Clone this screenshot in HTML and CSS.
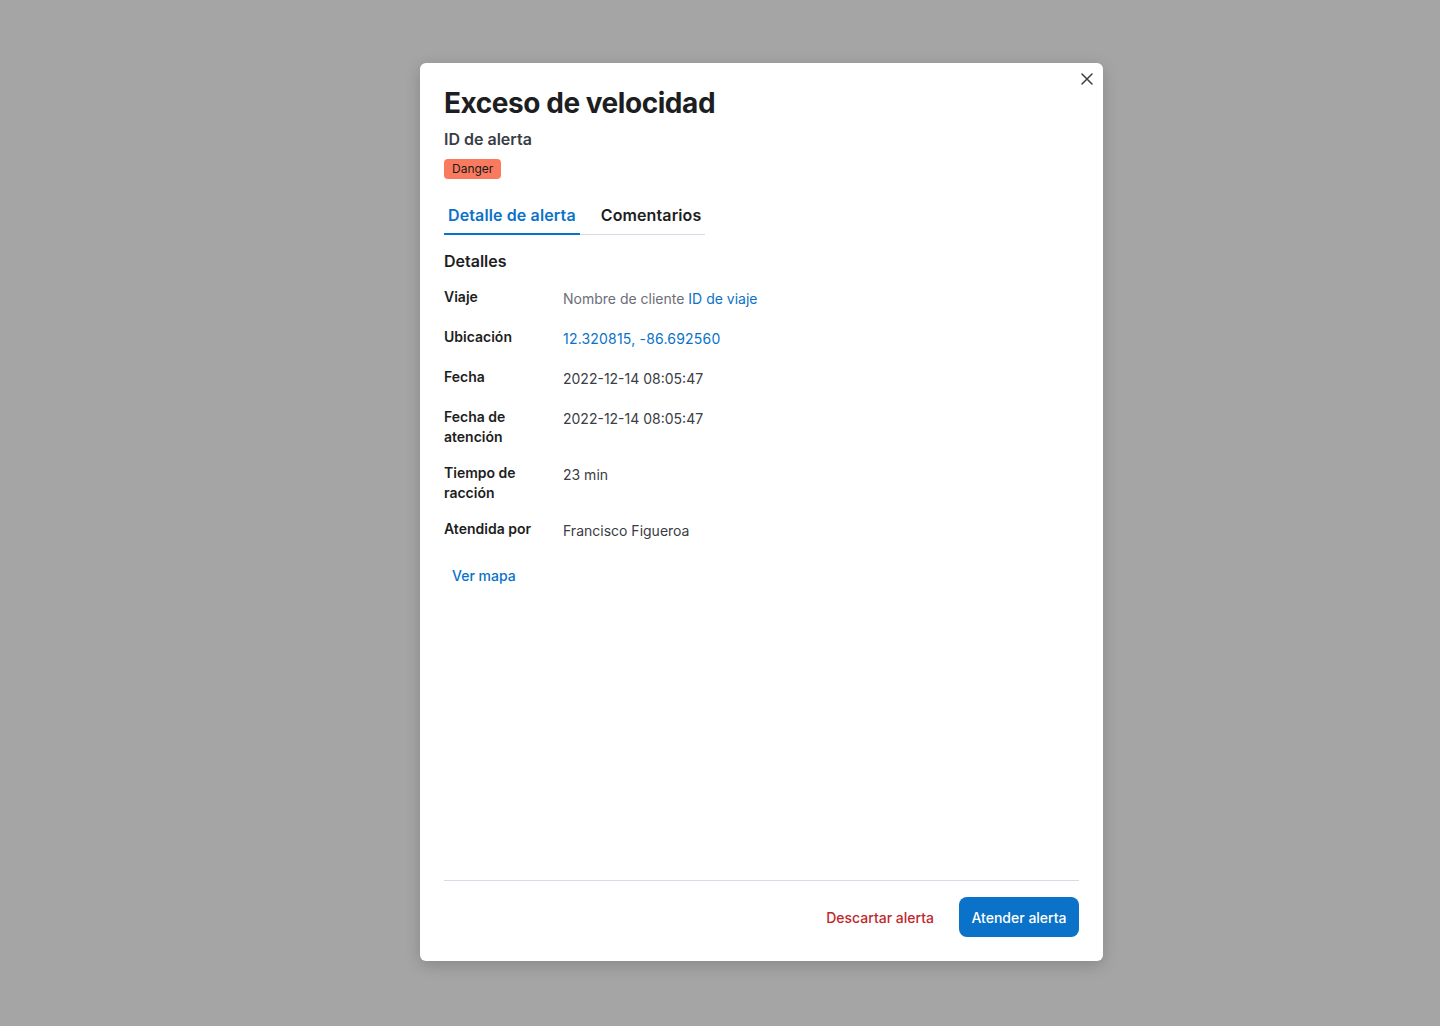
FILE: index.html
```html
<!DOCTYPE html>
<html lang="es">
<head>
<meta charset="utf-8">
<title>Exceso de velocidad</title>
<link rel="stylesheet" href="styles.css">
</head>
<body>
<div class="overlay">
  <div class="modal" role="dialog">
    <button class="close" aria-label="Cerrar">
      <svg width="12" height="12" viewBox="0 0 12 12"><path d="M1 1L11 11M11 1L1 11" stroke="#3b3d45" stroke-width="1.5" stroke-linecap="round"/></svg>
    </button>
    <div class="modal-body">
      <h1 class="title">Exceso de velocidad</h1>
      <h2 class="subtitle">ID de alerta</h2>
      <span class="badge">Danger</span>
      <div class="tabs">
        <div class="tab active">Detalle de alerta</div>
        <div class="tab">Comentarios</div>
      </div>
      <h3 class="section">Detalles</h3>
      <div class="rows">
        <div class="row"><div class="label">Viaje</div><div class="value"><span class="muted">Nombre de cliente</span> <a class="link">ID de viaje</a></div></div>
        <div class="row"><div class="label">Ubicación</div><div class="value"><a class="link num">12.320815, -86.692560</a></div></div>
        <div class="row"><div class="label">Fecha</div><div class="value">2022-12-14 08:05:47</div></div>
        <div class="row"><div class="label">Fecha de atención</div><div class="value">2022-12-14 08:05:47</div></div>
        <div class="row"><div class="label">Tiempo de racción</div><div class="value">23 min</div></div>
        <div class="row"><div class="label">Atendida por</div><div class="value">Francisco Figueroa</div></div>
      </div>
      <button class="map-btn">Ver mapa</button>
    </div>
    <div class="modal-footer">
      <button class="btn-ghost">Descartar alerta</button>
      <button class="btn-primary">Atender alerta</button>
    </div>
  </div>
</div>
</body>
</html>
```

FILE: styles.css
```css
* { box-sizing: border-box; }
html, body { margin: 0; padding: 0; }
body {
  font-family: Inter, "Noto Sans", sans-serif;
  background: #a5a5a5;
  width: 1440px;
  height: 1026px;
  overflow: hidden;
}
.overlay {
  display: flex;
  justify-content: center;
  padding-top: 63px;
  padding-left: 83px;
}
.modal {
  position: relative;
  width: 683px;
  height: 898px;
  background: #fff;
  border-radius: 6px;
  box-shadow: 0 4px 16px rgba(0,0,0,0.18);
  display: flex;
  flex-direction: column;
  padding: 24px 24px 24px;
}
.close {
  position: absolute;
  top: 6px;
  right: 6px;
  width: 20px;
  height: 20px;
  border: 0;
  background: none;
  padding: 0;
  display: flex;
  align-items: center;
  justify-content: center;
  cursor: pointer;
}
.modal-body {
  flex: 1;
  display: flex;
  flex-direction: column;
  align-items: flex-start;
}
.title {
  margin: 0;
  font-size: 28px;
  line-height: 32px;
  font-weight: 700;
  color: #1d1e22;
  letter-spacing: -0.45px;
}
.subtitle {
  margin: 8px 0 0;
  font-size: 16px;
  line-height: 24px;
  font-weight: 600;
  color: #3a3c46;
}
.badge {
  margin-top: 8px;
  display: inline-block;
  background: #fa7a5f;
  color: #1a1a1a;
  font-size: 12px;
  line-height: 20px;
  padding: 0 8px;
  border-radius: 4px;
}
.tabs {
  margin-top: 16px;
  display: flex;
  gap: 17px;
  border-bottom: 1px solid #d6dbe6;
}
.tab {
  height: 40px;
  padding: 1px 4px 0;
  display: flex;
  align-items: center;
  font-size: 16px;
  font-weight: 600;
  letter-spacing: 0.12px;
  color: #1d1e22;
  margin-bottom: -1px;
  border-bottom: 2px solid transparent;
}
.tab.active {
  color: #0a72c8;
  border-bottom-color: #0a72c8;
}
.section {
  margin: 16px 0 0;
  font-size: 16px;
  line-height: 20px;
  font-weight: 600;
  color: #1d1e22;
}
.rows {
  margin-top: 16px;
  display: flex;
  flex-direction: column;
  gap: 16px;
}
.row {
  display: grid;
  grid-template-columns: 119px 1fr;
  align-items: start;
}
.label {
  font-size: 14px;
  line-height: 20px;
  font-weight: 600;
  color: #1d1e22;
  padding-right: 16px;
}
.value {
  font-size: 14px;
  line-height: 24px;
  color: #3a3c46;
}
.muted { color: #6b6e78; }
.link { color: #0a72c8; text-decoration: none; }
.num { letter-spacing: 0.2px; }
.map-btn {
  margin-top: 16px;
  height: 32px;
  padding: 0 8px;
  border: 0;
  background: none;
  font-family: inherit;
  font-size: 14px;
  font-weight: 500;
  color: #0a72c8;
  cursor: pointer;
}
.modal-footer {
  border-top: 1px solid #d6dbe6;
  padding-top: 16px;
  display: flex;
  justify-content: flex-end;
  align-items: center;
  gap: 8px;
}
.btn-ghost, .btn-primary {
  height: 40px;
  padding: 0 12px;
  border: 0;
  border-radius: 8px;
  font-family: inherit;
  font-size: 14px;
  font-weight: 500;
  cursor: pointer;
}
.btn-ghost {
  background: none;
  color: #c0282c;
  padding: 0 16px;
  margin-right: 1px;
}
.btn-primary {
  background: #0a72c8;
  color: #fff;
  padding: 0 12px 0 12px;
  min-width: 120px;
}
```
